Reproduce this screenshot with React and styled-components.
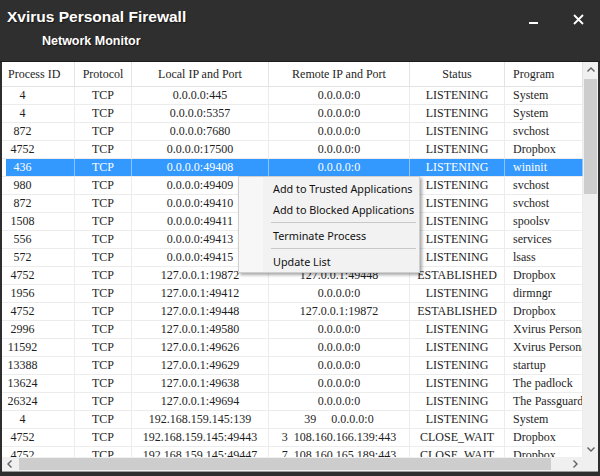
import React from "react";
import styled, { createGlobalStyle } from "styled-components";

const Global = createGlobalStyle`
  html, body { margin: 0; padding: 0; background: #2e2e2e; }
  body { width: 600px; height: 476px; overflow: hidden; }
`;

const columns = "73px 57px 137px 141px 95px 78px";

const headers = [
  { label: "Process ID", align: "pid" },
  { label: "Protocol", align: "center" },
  { label: "Local IP and Port", align: "center" },
  { label: "Remote IP and Port", align: "center" },
  { label: "Status", align: "center" },
  { label: "Program", align: "left" },
];

const rows = [
  ["4", "TCP", "0.0.0.0:445", "0.0.0.0:0", "LISTENING", "System"],
  ["4", "TCP", "0.0.0.0:5357", "0.0.0.0:0", "LISTENING", "System"],
  ["872", "TCP", "0.0.0.0:7680", "0.0.0.0:0", "LISTENING", "svchost"],
  ["4752", "TCP", "0.0.0.0:17500", "0.0.0.0:0", "LISTENING", "Dropbox"],
  ["436", "TCP", "0.0.0.0:49408", "0.0.0.0:0", "LISTENING", "wininit"],
  ["980", "TCP", "0.0.0.0:49409", "0.0.0.0:0", "LISTENING", "svchost"],
  ["872", "TCP", "0.0.0.0:49410", "0.0.0.0:0", "LISTENING", "svchost"],
  ["1508", "TCP", "0.0.0.0:49411", "0.0.0.0:0", "LISTENING", "spoolsv"],
  ["556", "TCP", "0.0.0.0:49413", "0.0.0.0:0", "LISTENING", "services"],
  ["572", "TCP", "0.0.0.0:49415", "0.0.0.0:0", "LISTENING", "lsass"],
  ["4752", "TCP", "127.0.0.1:19872", "127.0.0.1:49448", "ESTABLISHED", "Dropbox"],
  ["1956", "TCP", "127.0.0.1:49412", "0.0.0.0:0", "LISTENING", "dirmngr"],
  ["4752", "TCP", "127.0.0.1:49448", "127.0.0.1:19872", "ESTABLISHED", "Dropbox"],
  ["2996", "TCP", "127.0.0.1:49580", "0.0.0.0:0", "LISTENING", "Xvirus Personal Firewall"],
  ["11592", "TCP", "127.0.0.1:49626", "0.0.0.0:0", "LISTENING", "Xvirus Personal Firewall"],
  ["13388", "TCP", "127.0.0.1:49629", "0.0.0.0:0", "LISTENING", "startup"],
  ["13624", "TCP", "127.0.0.1:49638", "0.0.0.0:0", "LISTENING", "The padlock"],
  ["26324", "TCP", "127.0.0.1:49694", "0.0.0.0:0", "LISTENING", "The Passguard"],
  ["4", "TCP", "192.168.159.145:139", "39     0.0.0.0:0", "LISTENING", "System"],
  ["4752", "TCP", "192.168.159.145:49443", "3  108.160.166.139:443", "CLOSE_WAIT", "Dropbox"],
  ["4752", "TCP", "192.168.159.145:49447", "7  108.160.165.189:443", "CLOSE_WAIT", "Dropbox"],
];

const SELECTED = 4;

export default function App() {
  return (
    <>
      <Global />
      <Window>
        <TitleBar>
          <Titles>
            <AppName>Xvirus Personal Firewall</AppName>
            <SubTitle>Network Monitor</SubTitle>
          </Titles>
          <WindowButtons>
            <WinButton aria-label="minimize">
              <svg width="10" height="10" viewBox="0 0 10 10">
                <rect x="0" y="8" width="9" height="2" fill="#fff" />
              </svg>
            </WinButton>
            <WinButton aria-label="close">
              <svg width="11" height="11" viewBox="0 0 11 11">
                <path d="M1 1 L10 10 M10 1 L1 10" stroke="#fff" strokeWidth="1.8" />
              </svg>
            </WinButton>
          </WindowButtons>
        </TitleBar>

        <Frame>
          <TableArea>
            <HeaderRow>
              {headers.map((h) => (
                <HeadCell key={h.label} $align={h.align}>
                  {h.label}
                </HeadCell>
              ))}
            </HeaderRow>
            {rows.map((r, i) => (
              <Row key={i} $selected={i === SELECTED}>
                {r.map((v, j) => (
                  <Cell key={j} $align={headers[j].align} $selected={i === SELECTED}>
                    {v}
                  </Cell>
                ))}
              </Row>
            ))}
          </TableArea>

          <VScroll>
            <Arrow>
              <svg width="8" height="5" viewBox="0 0 8 5">
                <path d="M0.5 4.5 L4 1 L7.5 4.5" fill="none" stroke="#606060" strokeWidth="1.4" />
              </svg>
            </Arrow>
            <VTrack>
              <VThumb />
            </VTrack>
            <Arrow>
              <svg width="8" height="5" viewBox="0 0 8 5">
                <path d="M0.5 0.5 L4 4 L7.5 0.5" fill="none" stroke="#606060" strokeWidth="1.4" />
              </svg>
            </Arrow>
          </VScroll>

          <HScroll>
            <Arrow>
              <svg width="5" height="8" viewBox="0 0 5 8">
                <path d="M4.5 0.5 L1 4 L4.5 7.5" fill="none" stroke="#606060" strokeWidth="1.4" />
              </svg>
            </Arrow>
            <HTrack>
              <HThumb />
            </HTrack>
            <Arrow>
              <svg width="5" height="8" viewBox="0 0 5 8">
                <path d="M0.5 0.5 L4 4 L0.5 7.5" fill="none" stroke="#606060" strokeWidth="1.4" />
              </svg>
            </Arrow>
          </HScroll>
          <Corner />
        </Frame>

        <ContextMenu>
          <MenuItem>Add to Trusted Applications</MenuItem>
          <MenuItem>Add to Blocked Applications</MenuItem>
          <Separator />
          <MenuItem>Terminate Process</MenuItem>
          <Separator />
          <MenuItem>Update List</MenuItem>
        </ContextMenu>
      </Window>
    </>
  );
}

const Window = styled.div`
  position: relative;
  width: 600px;
  height: 476px;
  background: #2e2e2e;
  display: flex;
  flex-direction: column;
  box-sizing: border-box;
  padding: 0 2px 4px 2px;
`;

const TitleBar = styled.div`
  height: 61px;
  flex: none;
  display: flex;
  justify-content: space-between;
  align-items: flex-start;
  background: #2f2f2f;
  margin: 0 -2px;
  border-bottom: 1px solid #1c1c1c;
`;

const Titles = styled.div`
  display: flex;
  flex-direction: column;
  padding: 7px 0 0 7px;
  color: #fff;
  font-family: "Liberation Sans", Arial, sans-serif;
  font-weight: bold;
`;

const AppName = styled.div`
  font-size: 15.5px;
  line-height: 20px;
  text-shadow: 1px 1px 1px rgba(0, 0, 0, 0.5);
`;

const SubTitle = styled.div`
  font-size: 12.5px;
  line-height: 16px;
  margin: 6px 0 0 35px;
  text-shadow: 1px 1px 1px rgba(0, 0, 0, 0.5);
`;

const WindowButtons = styled.div`
  display: flex;
  align-items: center;
  gap: 24px;
  padding: 12px 12px 0 0;
`;

const WinButton = styled.div`
  width: 20px;
  height: 14px;
  display: flex;
  align-items: center;
  justify-content: center;
`;

const Frame = styled.div`
  flex: 1;
  display: grid;
  grid-template-columns: 581px 15px;
  grid-template-rows: 1fr 14px;
  background: #fff;
  border-bottom: 1px solid #9a9a9a;
  overflow: hidden;
`;

const TableArea = styled.div`
  overflow: hidden;
  font-family: "Liberation Serif", "Times New Roman", serif;
  font-size: 12px;
  color: #1e1e1e;
`;

const HeaderRow = styled.div`
  display: grid;
  grid-template-columns: ${columns};
  height: 24px;
  border-bottom: 1px solid #e3e3e3;
`;

const alignCss = ({ $align }) =>
  $align === "left"
    ? "justify-content: flex-start; padding-left: 8px;"
    : $align === "pid"
    ? "justify-content: center; padding-right: 31px;"
    : "justify-content: center;";

const HeadCell = styled.div`
  display: flex;
  align-items: center;
  border-right: 1px solid #e3e3e3;
  white-space: nowrap;
  overflow: hidden;
  ${alignCss}
  ${({ $align }) => $align === "pid" && "justify-content: flex-start; padding: 0 0 0 6px;"}
`;

const Row = styled.div`
  display: grid;
  grid-template-columns: ${columns};
  height: 18px;
  box-sizing: border-box;
  border-bottom: 1px solid #ececec;
  background: ${({ $selected }) =>
    $selected ? "linear-gradient(to right, #fff 0, #fff 4px, #3399ff 4px)" : "#fff"};
  color: ${({ $selected }) => ($selected ? "#fff" : "inherit")};
`;

const Cell = styled.div`
  display: flex;
  align-items: center;
  border-right: 1px solid ${({ $selected }) => ($selected ? "#8cc4ff" : "#ececec")};
  white-space: pre;
  overflow: hidden;
  ${alignCss}
`;

const VScroll = styled.div`
  display: flex;
  flex-direction: column;
  background: #f0f0f0;
`;

const Arrow = styled.div`
  flex: none;
  width: 15px;
  height: 15px;
  display: flex;
  align-items: center;
  justify-content: center;
`;

const VTrack = styled.div`
  flex: 1;
  padding: 2px 1px;
  display: flex;
  flex-direction: column;
`;

const VThumb = styled.div`
  height: 115px;
  background: #cdcdcd;
`;

const HScroll = styled.div`
  display: flex;
  align-items: center;
  background: #f0f0f0;
`;

const HTrack = styled.div`
  flex: 1;
  height: 100%;
  padding: 1px 2px;
  box-sizing: border-box;
  display: flex;
`;

const HThumb = styled.div`
  width: 532px;
  background: #cdcdcd;
`;

const Corner = styled.div`
  background: #f0f0f0;
`;

const ContextMenu = styled.div`
  position: absolute;
  left: 238px;
  top: 176px;
  width: 182px;
  box-sizing: border-box;
  padding: 1px 3px 0 2px;
  background: linear-gradient(to right, #f7f7f7 0, #f7f7f7 24px, #f2f2f2 24px);
  border: 1px solid #cfcfcf;
  box-shadow: 2px 2px 3px rgba(0, 0, 0, 0.35);
  font-family: "Noto Sans", "Open Sans", sans-serif;
  font-size: 10.8px;
  color: #111;
`;

const MenuItem = styled.div`
  height: 21px;
  display: flex;
  align-items: center;
  padding-left: 32px;
  white-space: nowrap;
`;

const Separator = styled.div`
  height: 1px;
  margin: 2px 0 2px 30px;
  background: #c8c8c8;
`;
